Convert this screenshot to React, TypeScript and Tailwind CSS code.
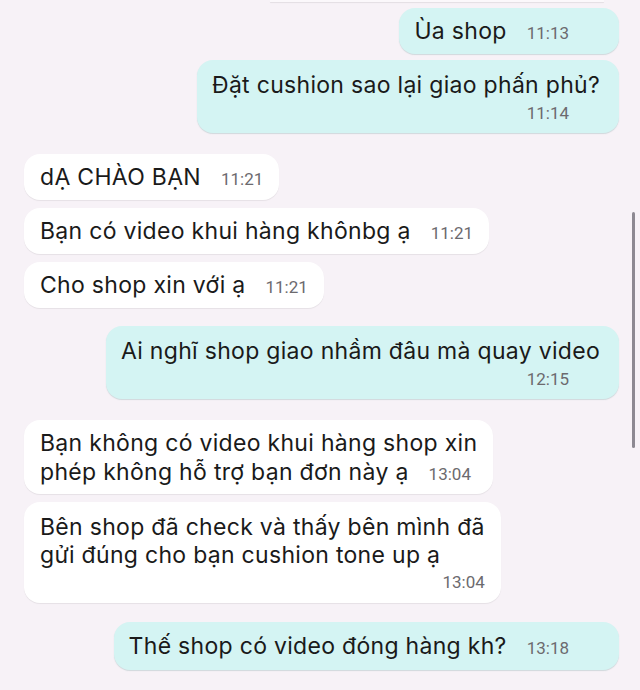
import React from 'react';

type Msg = {
  out: boolean;
  lines: string[];
  time: string;
  timeRow?: boolean; // time sits on its own row under the text
  mt: string;
  pad: string;
  lead: string;
};

const messages: Msg[] = [
  { out: true, lines: ['Ùa shop'], time: '11:13', mt: 'mt-[8px]', pad: 'py-[8px]', lead: 'leading-[30px]' },
  { out: true, lines: ['Đặt cushion sao lại giao phấn phủ?'], time: '11:14', timeRow: true, mt: 'mt-[6px]', pad: 'pt-[10px] pb-[7px]', lead: 'leading-[30px]' },
  { out: false, lines: ['dẠ CHÀO BẠN'], time: '11:21', mt: 'mt-[21px]', pad: 'py-[8px]', lead: 'leading-[30px]' },
  { out: false, lines: ['Bạn có video khui hàng khônbg ạ'], time: '11:21', mt: 'mt-[8px]', pad: 'py-[8px]', lead: 'leading-[30px]' },
  { out: false, lines: ['Cho shop xin với ạ'], time: '11:21', mt: 'mt-[8px]', pad: 'py-[8px]', lead: 'leading-[30px]' },
  { out: true, lines: ['Ai nghĩ shop giao nhầm đâu mà quay video'], time: '12:15', timeRow: true, mt: 'mt-[18px]', pad: 'pt-[10px] pb-[7px]', lead: 'leading-[30px]' },
  { out: false, lines: ['Bạn không có video khui hàng shop xin', 'phép không hỗ trợ bạn đơn này ạ'], time: '13:04', mt: 'mt-[21px]', pad: 'pt-[9px] pb-[7px]', lead: 'leading-[29px]' },
  { out: false, lines: ['Bên shop đã check và thấy bên mình đã', 'gửi đúng cho bạn cushion tone up ạ'], time: '13:04', timeRow: true, mt: 'mt-[8px]', pad: 'pt-[11px] pb-[8px]', lead: 'leading-[28px]' },
  { out: true, lines: ['Thế shop có video đóng hàng kh?'], time: '13:18', mt: 'mt-[19px]', pad: 'py-[9px]', lead: 'leading-[30px]' },
];

const Time = ({ t, out }: { t: string; out: boolean }) => (
  <span
    className={`text-[17px] leading-none tracking-normal text-[#6c6a6e] font-['Roboto',sans-serif] ${out ? 'mr-[31px]' : ''}`}
  >
    {t}
  </span>
);

const Bubble = ({ m }: { m: Msg }) => {
  const last = m.lines.length - 1;
  return (
    <div className={`flex ${m.out ? 'justify-end pr-[21px]' : 'justify-start pl-[24px]'} ${m.mt}`}>
      <div
        className={`rounded-[16px] ${m.pad} ${m.out ? 'bg-[#d4f4f3] pl-[15px] pr-[19px] shadow-[0_1px_1px_rgba(90,140,140,0.25)]' : 'bg-white pl-[16px] pr-[16px] shadow-[0_1px_1px_rgba(0,0,0,0.07)]'}`}
      >
        {m.lines.map((l, i) => (
          <div key={i} className={`${m.lead} text-[23px] tracking-[0.3px] text-[#1a1a1a] flex items-baseline`}>
            <span>{l}</span>
            {i === last && !m.timeRow && (
              <span className="ml-[20px] leading-none">
                <Time t={m.time} out={m.out} />
              </span>
            )}
          </div>
        ))}
        {m.timeRow && (
          <div className="h-[26px] leading-[26px] flex justify-end items-center">
            <Time t={m.time} out={m.out} />
          </div>
        )}
      </div>
    </div>
  );
};

export default function App() {
  return (
    <div
      className="relative w-[640px] h-[690px] overflow-hidden bg-[#f7f2f7]"
      style={{ fontFamily: 'Inter, Roboto, sans-serif' }}
    >
      {/* tail of the previous bubble, cut off at the top */}
      <div className="ml-[270px] w-[334px] h-[2px] bg-[#fbf8fb] shadow-[0_1px_1px_rgba(0,0,0,0.08)]" />
      <div className="-mt-[2px]">
        {messages.map((m, i) => (
          <Bubble key={i} m={m} />
        ))}
      </div>
      {/* scrollbar */}
      <div className="absolute left-[632px] top-[212px] w-[3px] h-[236px] rounded-full bg-[#8d8992]" />
    </div>
  );
}
